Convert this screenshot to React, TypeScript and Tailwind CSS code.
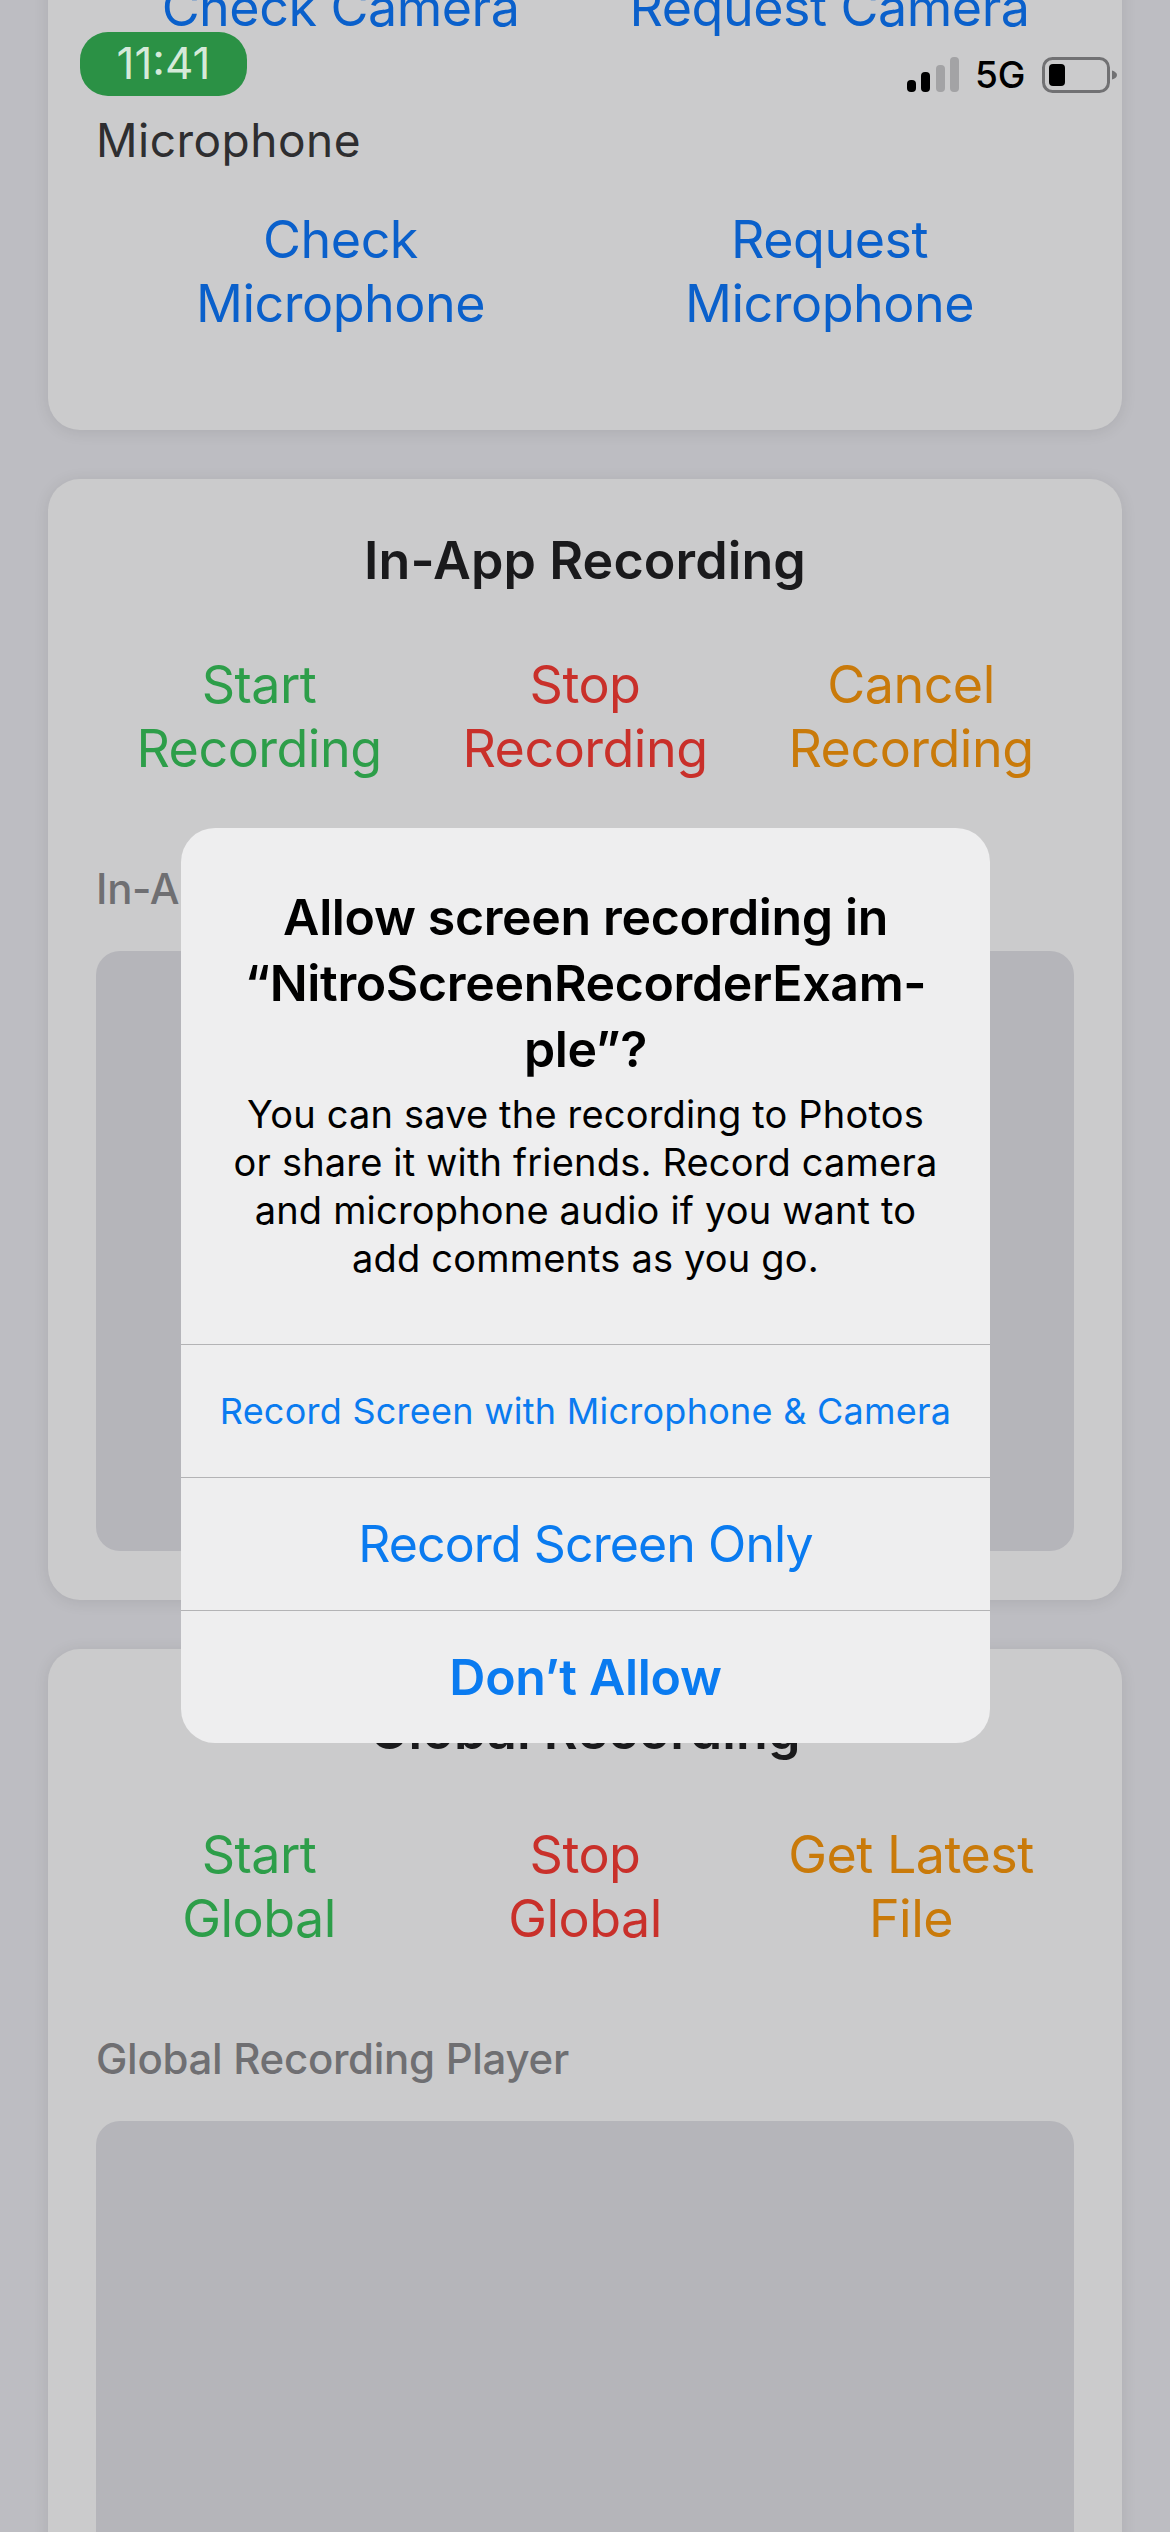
const font = { fontFamily: 'Inter, "Noto Sans", sans-serif' }

function ActionRow({ items, cols }: { items: { lines: string[]; color: string }[]; cols: 'two' | 'three' }) {
  return (
    <div className={cols === 'two' ? 'grid grid-cols-2' : 'grid grid-cols-3'}>
      {items.map((item) => (
        <div key={item.lines.join(' ')} className={`text-center text-[52px] leading-[64px] tracking-[-0.5px] ${item.color}`}>
          {item.lines.map((line) => (
            <div key={line}>{line}</div>
          ))}
        </div>
      ))}
    </div>
  )
}

function Card({ children, className }: { children: React.ReactNode; className?: string }) {
  return (
    <section className={`rounded-[32px] bg-[#cbcbcc] px-[48px] shadow-[0_2px_16px_rgba(0,0,0,0.09)] ${className ?? ''}`}>
      {children}
    </section>
  )
}

function StatusBar() {
  return (
    <>
      <div className="absolute left-[80px] top-[32px] flex h-[64px] w-[167px] items-center justify-center rounded-[28px] bg-[#2b9145] pb-[2px] text-[44px] font-normal text-[#d5ead9]">
        11:41
      </div>
      <div className="absolute left-[907px] top-[56px] flex items-center">
        <svg width="52" height="38" viewBox="0 0 52 38" className="mr-[16px]">
          <rect x="0" y="24" width="9" height="12" rx="4" fill="#000" />
          <rect x="14" y="16" width="9" height="20" rx="4" fill="#000" />
          <rect x="29" y="9" width="9" height="27" rx="4" fill="#a3a3a5" />
          <rect x="43" y="1" width="9" height="35" rx="4" fill="#a3a3a5" />
        </svg>
        <span className="text-[37px] font-medium leading-[38px] text-black">5G</span>
        <svg width="76" height="38" viewBox="0 0 76 38" className="ml-[16px]">
          <rect x="1.5" y="2.5" width="65" height="33" rx="9" fill="none" stroke="#717173" strokeWidth="3" />
          <rect x="7" y="8" width="16" height="22" rx="4" fill="#000" />
          <path d="M70 14.5 C73 15.5 75 17 75 19 C75 21 73 22.5 70 23.5 Z" fill="#717173" />
        </svg>
      </div>
    </>
  )
}

function PermissionDialog() {
  return (
    <div className="absolute left-[181px] top-[828px] w-[809px] overflow-hidden rounded-[34px] bg-[#eeeeef] text-center text-black">
      <div className="h-[516px] px-[20px] pt-[56px]">
        <h2 className="text-[50px] font-semibold leading-[66px] tracking-[-0.35px]">
          Allow screen recording in
          <br />
          “NitroScreenRecorderExam-
          <br />
          ple”?
        </h2>
        <p className="mt-[8px] text-[38px] leading-[48px] tracking-[0.18px]">
          You can save the recording to Photos
          <br />
          or share it with friends. Record camera
          <br />
          and microphone audio if you want to
          <br />
          add comments as you go.
        </p>
      </div>
      <div className="flex h-[133px] items-center justify-center border-t border-[#b3b3b5] text-[36px] tracking-[0.25px] text-[#0a7bf0]">
        Record Screen with Microphone &amp; Camera
      </div>
      <div className="flex h-[133px] items-center justify-center border-t border-[#b3b3b5] text-[50px] tracking-[-0.9px] text-[#0a7bf0]">
        Record Screen Only
      </div>
      <div className="flex h-[133px] items-center justify-center border-t border-[#b3b3b5] text-[50px] font-semibold tracking-[-0.3px] text-[#0a7bf0]">
        Don’t Allow
      </div>
    </div>
  )
}

export default function App() {
  return (
    <div className="relative h-[2532px] w-[1170px] overflow-hidden bg-[#bdbdc2]" style={font}>
      <div className="mx-[48px] mt-[-100px] flex flex-col gap-[49px]">
        <Card className="h-[530px] pt-[76px]">
          <ActionRow
            cols="two"
            items={[
              { lines: ['Check Camera'], color: 'text-[#0a60cb]' },
              { lines: ['Request Camera'], color: 'text-[#0a60cb]' },
            ]}
          />
          <div className="mt-[72px] text-[46px] leading-[56px] tracking-[0.5px] text-[#2e2e30]">Microphone</div>
          <div className="mt-[40px]">
            <ActionRow
              cols="two"
              items={[
                { lines: ['Check', 'Microphone'], color: 'text-[#0a60cb]' },
                { lines: ['Request', 'Microphone'], color: 'text-[#0a60cb]' },
              ]}
            />
          </div>
        </Card>

        <Card className="h-[1121px] pt-[50px]">
          <h2 className="text-center text-[52px] font-semibold leading-[64px] tracking-[0.1px] text-[#1a1a1c]">In-App Recording</h2>
          <div className="mt-[60px]">
            <ActionRow
              cols="three"
              items={[
                { lines: ['Start', 'Recording'], color: 'text-[#2d9e49]' },
                { lines: ['Stop', 'Recording'], color: 'text-[#c9302a]' },
                { lines: ['Cancel', 'Recording'], color: 'text-[#c97a0a]' },
              ]}
            />
          </div>
          <div className="mt-[83px] text-[42px] font-medium leading-[50px] tracking-[-0.3px] text-[#6f6f72]">In-App Recording Player</div>
          <div className="mt-[37px] h-[600px] rounded-[24px] bg-[#b5b5ba]" />
        </Card>

        <Card className="h-[1100px] pt-[50px]">
          <h2 className="text-center text-[52px] font-semibold leading-[64px] tracking-[0.1px] text-[#1a1a1c]">Global Recording</h2>
          <div className="mt-[60px]">
            <ActionRow
              cols="three"
              items={[
                { lines: ['Start', 'Global'], color: 'text-[#2d9e49]' },
                { lines: ['Stop', 'Global'], color: 'text-[#c9302a]' },
                { lines: ['Get Latest', 'File'], color: 'text-[#c97a0a]' },
              ]}
            />
          </div>
          <div className="mt-[83px] text-[42px] font-medium leading-[50px] tracking-[-0.3px] text-[#6f6f72]">Global Recording Player</div>
          <div className="mt-[37px] h-[600px] rounded-[24px] bg-[#b5b5ba]" />
        </Card>
      </div>

      <StatusBar />
      <PermissionDialog />
    </div>
  )
}
